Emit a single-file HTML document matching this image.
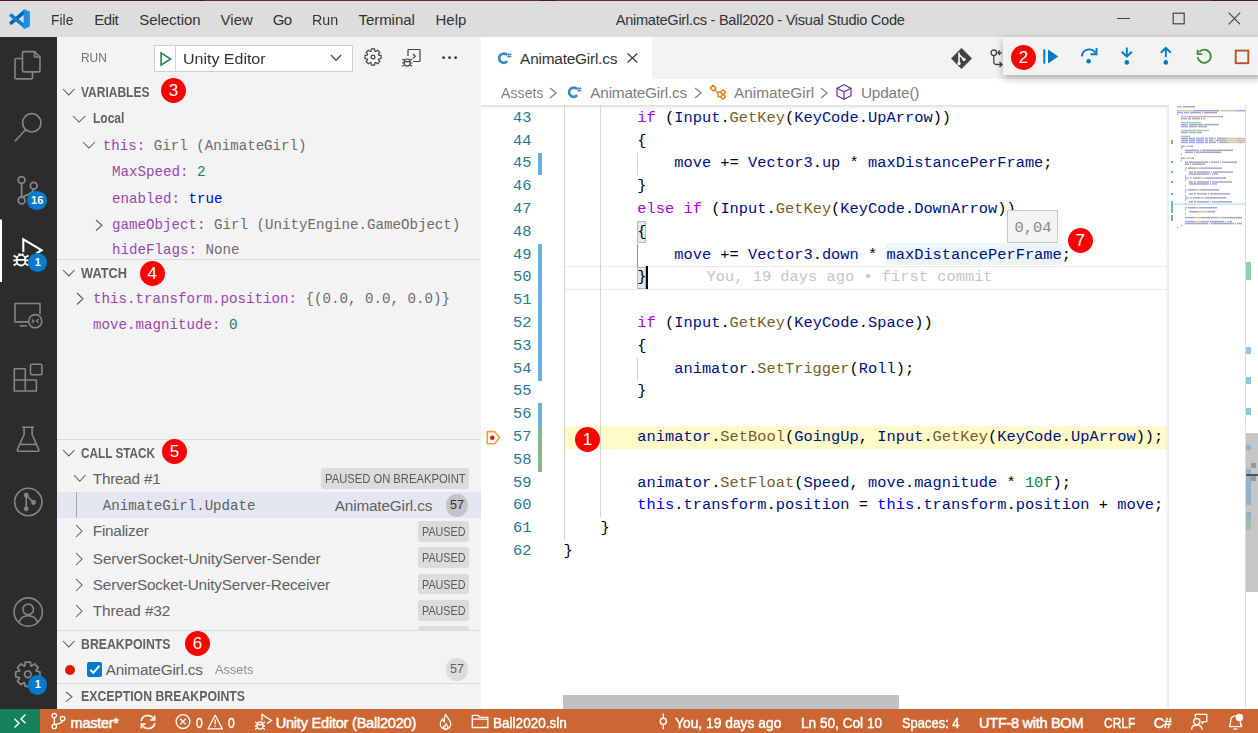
<!DOCTYPE html>
<html><head><meta charset="utf-8">
<style>
*{box-sizing:border-box;margin:0;padding:0}
html,body{width:1258px;height:733px;overflow:hidden;background:#fff;font-family:"Liberation Sans",sans-serif;position:relative}
.abs{position:absolute}
.t{position:absolute;white-space:pre;line-height:1}
</style></head><body>
<div class="abs" style="left:0.00px;top:0.00px;width:1258.00px;height:37.00px;background:#dddddd;"></div><div class="abs" style="left:0.00px;top:0.00px;width:1258.00px;height:1.30px;background:#3a2222;"></div><div class="abs" style="left:205.00px;top:0.00px;width:335.00px;height:1.30px;background:#6a2e30;"></div><div class="abs" style="left:556.00px;top:0.00px;width:655.00px;height:1.30px;background:#6a2e30;"></div><div class="abs" style="left:0.00px;top:37.00px;width:57.00px;height:672.00px;background:#2c2c2c;"></div><div class="abs" style="left:57.00px;top:37.00px;width:424.00px;height:672.00px;background:#f3f3f3;"></div><div class="abs" style="left:481.00px;top:37.00px;width:777.00px;height:42.00px;background:#f3f3f3;"></div><div class="abs" style="left:481.00px;top:79.00px;width:777.00px;height:630.00px;background:#ffffff;"></div><div class="abs" style="left:0.00px;top:709.00px;width:1258.00px;height:24.00px;background:#cc6633;"></div><div class="abs" style="left:0.00px;top:709.00px;width:40.00px;height:24.00px;background:#16825d;"></div><svg class="abs" style="left:0;top:0" width="40" height="37" viewBox="0 0 40 37"><path d="M11.3 22.9 L24.6 11.6" stroke="#0065b0" stroke-width="3.7" stroke-linecap="round"/><path d="M11.3 15.4 L24.6 26.4" stroke="#0a7fd0" stroke-width="3.7" stroke-linecap="round"/><path d="M23.6 8.9 L29.9 11.6 V26.6 L23.6 29.2 Z" fill="#1e8fe6"/></svg><div class="t" style="left:51.10px;top:12.30px;font-size:15.00px;color:#333333;transform:scaleX(0.9275);transform-origin:0 0;">File</div><div class="t" style="left:94.20px;top:12.30px;font-size:15.00px;color:#333333;letter-spacing:-0.417px;">Edit</div><div class="t" style="left:139.20px;top:12.30px;font-size:15.00px;color:#333333;letter-spacing:-0.038px;">Selection</div><div class="t" style="left:220.50px;top:12.30px;font-size:15.00px;color:#333333;letter-spacing:0.067px;">View</div><div class="t" style="left:272.80px;top:12.30px;font-size:15.00px;color:#333333;letter-spacing:-0.800px;">Go</div><div class="t" style="left:312.00px;top:12.30px;font-size:15.00px;color:#333333;transform:scaleX(0.9455);transform-origin:0 0;">Run</div><div class="t" style="left:358.50px;top:12.30px;font-size:15.00px;color:#333333;letter-spacing:-0.057px;">Terminal</div><div class="t" style="left:435.50px;top:12.30px;font-size:15.00px;color:#333333;letter-spacing:0.017px;">Help</div><div class="t" style="left:615.70px;top:12.64px;font-size:14.60px;color:#333333;letter-spacing:-0.273px;">AnimateGirl.cs - Ball2020 - Visual Studio Code</div><div class="abs" style="left:1117.30px;top:18.20px;width:13.10px;height:1.30px;background:#444;"></div><svg class="abs" style="left:1172.00px;top:12.00px;" width="13" height="13" viewBox="0 0 13 13"><rect x="1.2" y="1.2" width="11" height="10.6" fill="none" stroke="#444" stroke-width="1.2"/></svg><svg class="abs" style="left:1227.50px;top:12.00px;" width="13" height="13" viewBox="0 0 13 13"><path d="M0.6 0.6 L12.2 12.4 M12.2 0.6 L0.6 12.4" stroke="#444" stroke-width="1.2"/></svg><svg class="abs" style="left:0;top:37px" width="57" height="672" viewBox="0 37 57 672"><g fill="none" stroke="#858585" stroke-width="1.6" stroke-linejoin="round"><path d="M23.8 51.6 H34.6 L40 57 V70.5 a1.4 1.4 0 0 1 -1.4 1.4 H23.9 a1.4 1.4 0 0 1 -1.4 -1.4 V53 a1.4 1.4 0 0 1 1.3 -1.4 Z"/><path d="M34.6 51.6 V57 H40"/><path d="M22.5 58.5 H16.4 a1.4 1.4 0 0 0 -1.4 1.4 V77.5 a1.4 1.4 0 0 0 1.4 1.4 H31.1 a1.4 1.4 0 0 0 1.4 -1.4 V71.9"/></g><g fill="none" stroke="#858585" stroke-width="1.7"><circle cx="31.8" cy="122.8" r="9.2"/><path d="M25.3 130 L15.4 140.8" stroke-linecap="round"/></g><g fill="none" stroke="#858585" stroke-width="1.8"><circle cx="21.6" cy="180" r="3.4"/><circle cx="33.7" cy="185.7" r="3.4"/><circle cx="21.6" cy="200.4" r="3.4"/><path d="M21.6 183.4 V197"/><path d="M33.7 189.1 C33.7 194 28 193.5 22.6 197.2"/></g><rect x="0" y="219.5" width="2" height="62.5" fill="#fff"/><g fill="none" stroke="#fff" stroke-width="2.1" stroke-linejoin="miter"><path d="M23.3 252 V239.3 L41.6 250.2 L36.4 253.3"/></g><g fill="none" stroke="#fff" stroke-width="1.8"><ellipse cx="21" cy="260.2" rx="4.4" ry="5.3"/><path d="M16.6 259.8 H25.4 M13.6 255.6 L16.8 257.6 M28.4 255.6 L25.2 257.6 M13.3 260.4 H16.6 M25.4 260.4 H28.6 M13.6 265.6 L16.8 263.6 M28.4 265.6 L25.2 263.6 M18.8 254.8 L19.8 253.4 M23.2 254.8 L22.2 253.4"/></g><g fill="none" stroke="#858585" stroke-width="1.6"><path d="M28.3 321.9 H15 V303.5 H40 V314.3"/><path d="M19.6 325.9 H27"/><circle cx="35.2" cy="321.2" r="6.6"/></g><g fill="none" stroke="#858585" stroke-width="1.3"><path d="M31.8 319.5 l2.1 1.8 l-2.1 1.8 M38.6 319.1 l-2.1 1.8 l2.1 1.8"/></g><g fill="none" stroke="#858585" stroke-width="1.6" stroke-linejoin="round"><path d="M14.3 368.8 H25.3 V391 H14.3 Z M14.3 380 H36.4 V391 H25.3"/><rect x="30.5" y="364.3" width="11.4" height="10.4" rx="1.3"/></g><g fill="none" stroke="#858585" stroke-width="1.6" stroke-linejoin="round"><path d="M22.1 427.2 H34 M24.1 427.2 V434.5 L17.4 449.6 a1.2 1.2 0 0 0 1.1 1.6 H37.7 a1.2 1.2 0 0 0 1.1 -1.6 L32.1 434.5 V427.2"/><path d="M19.9 444.4 H36.3"/></g><g fill="none" stroke="#858585" stroke-width="1.6"><circle cx="28.3" cy="502" r="13.7"/><path d="M26.2 495.2 V508.8 M26.2 495.2 L33.6 502.5"/></g><g fill="#858585"><circle cx="26.2" cy="495.2" r="2.4"/><circle cx="33.6" cy="502.5" r="2.4"/><circle cx="26.2" cy="508.8" r="2.4"/></g><g fill="none" stroke="#858585" stroke-width="1.6"><circle cx="28.2" cy="612" r="14.1"/><circle cx="28.2" cy="609.4" r="5.3"/><path d="M18.8 622.6 C20.5 617.6 24 615.8 28.2 615.8 C32.4 615.8 35.9 617.6 37.6 622.6"/></g><g fill="none" stroke="#858585" stroke-width="1.7" stroke-linejoin="round"><polygon points="25.22,662.17 30.38,662.17 30.97,665.88 31.51,666.10 34.55,663.90 38.20,667.55 36.00,670.59 36.22,671.13 39.93,671.72 39.93,676.88 36.22,677.47 36.00,678.01 38.20,681.05 34.55,684.70 31.51,682.50 30.97,682.72 30.38,686.43 25.22,686.43 24.63,682.72 24.09,682.50 21.05,684.70 17.40,681.05 19.60,678.01 19.38,677.47 15.67,676.88 15.67,671.72 19.38,671.13 19.60,670.59 17.40,667.55 21.05,663.90 24.09,666.10 24.63,665.88"/><circle cx="27.80" cy="674.30" r="3.3"/></g></svg><div class="abs" style="left:27.45px;top:190.75px;width:19.50px;height:19.50px;border-radius:50%;background:#007acc;color:#fff;font-size:11.0px;font-weight:bold;text-align:center;line-height:19.50px;">16</div><div class="abs" style="left:27.95px;top:252.75px;width:19.50px;height:19.50px;border-radius:50%;background:#007acc;color:#fff;font-size:11.0px;font-weight:bold;text-align:center;line-height:19.50px;">1</div><div class="abs" style="left:27.95px;top:675.15px;width:19.50px;height:19.50px;border-radius:50%;background:#007acc;color:#fff;font-size:11.0px;font-weight:bold;text-align:center;line-height:19.50px;">1</div><div class="t" style="left:80.80px;top:52.06px;font-size:12.80px;color:#6f6f6f;transform:scaleX(0.9297);transform-origin:0 0;">RUN</div><div class="abs" style="left:154.20px;top:45.30px;width:198.60px;height:26.30px;background:#ffffff;border:1px solid #d0d0d0;"></div><div class="abs" style="left:175.00px;top:46.30px;width:1.00px;height:24.30px;background:#d0d0d0;"></div><svg class="abs" style="left:159.00px;top:50.50px;" width="14" height="16" viewBox="0 0 14 16"><path d="M2.1 1.9 L11.6 8 L2.1 14.1 Z" fill="none" stroke="#1e8a4c" stroke-width="1.6" stroke-linejoin="miter"/></svg><div class="t" style="left:183.40px;top:51.20px;font-size:15.00px;color:#333333;transform:scaleX(1.0651);transform-origin:0 0;">Unity Editor</div><svg class="abs" style="left:330.10px;top:54.00px;" width="12.1" height="7.9" viewBox="0 0 12.1 7.9"><path d="M1 1 L6.05 6.40 L11.10 1" fill="none" stroke="#424242" stroke-width="1.20"/></svg><svg class="abs" style="left:363.40px;top:47.20px;" width="20" height="20" viewBox="0 0 20 20"><g fill="none" stroke="#424242" stroke-width="1.2" stroke-linejoin="round"><polygon points="8.37,1.96 11.63,1.96 11.94,4.32 12.64,4.61 14.53,3.17 16.83,5.47 15.39,7.36 15.68,8.06 18.04,8.37 18.04,11.63 15.68,11.94 15.39,12.64 16.83,14.53 14.53,16.83 12.64,15.39 11.94,15.68 11.63,18.04 8.37,18.04 8.06,15.68 7.36,15.39 5.47,16.83 3.17,14.53 4.61,12.64 4.32,11.94 1.96,11.63 1.96,8.37 4.32,8.06 4.61,7.36 3.17,5.47 5.47,3.17 7.36,4.61 8.06,4.32"/><circle cx="10" cy="10" r="1.9"/></g></svg><svg class="abs" style="left:401.00px;top:48.00px;" width="21" height="21" viewBox="0 0 21 21"><g fill="none" stroke="#424242" stroke-width="1.2"><path d="M7 8 V2.2 a0.7 0.7 0 0 1 0.7 -0.7 H18.3 a0.7 0.7 0 0 1 0.7 0.7 V12.8 a0.7 0.7 0 0 1 -0.7 0.7 H12"/><path d="M12 6 l2.3 2.2 l-2.3 2.2"/><ellipse cx="6.2" cy="14.6" rx="3" ry="3.6"/><path d="M3.2 13.6 h6 M1.3 11 l2 1.3 M11.1 11 l-2 1.3 M1 15 h2.2 M9.2 15 h2.2 M1.3 18.3 l2 -1.3 M11.1 18.3 l-2 -1.3"/></g></svg><svg class="abs" style="left:442.20px;top:55.60px;" width="3.2" height="3.2" viewBox="0 0 3.2 3.2"><circle cx="1.6" cy="1.6" r="1.45" fill="#424242"/></svg><svg class="abs" style="left:448.40px;top:55.60px;" width="3.2" height="3.2" viewBox="0 0 3.2 3.2"><circle cx="1.6" cy="1.6" r="1.45" fill="#424242"/></svg><svg class="abs" style="left:454.40px;top:55.60px;" width="3.2" height="3.2" viewBox="0 0 3.2 3.2"><circle cx="1.6" cy="1.6" r="1.45" fill="#424242"/></svg><svg class="abs" style="left:61.60px;top:87.70px;" width="13.6" height="8.4" viewBox="0 0 13.6 8.4"><path d="M1 1 L6.80 6.90 L12.60 1" fill="none" stroke="#5a5a5a" stroke-width="1.05"/></svg><div class="t" style="left:80.80px;top:85.05px;font-size:14.00px;color:#616161;font-weight:bold;transform:scaleX(0.8566);transform-origin:0 0;">VARIABLES</div><div class="abs" style="left:161.10px;top:78.00px;width:25.00px;height:25.00px;border-radius:50%;background:#f00;color:#fff;font-size:17.0px;font-weight:normal;text-align:center;line-height:25.00px;">3</div><svg class="abs" style="left:72.00px;top:114.60px;" width="14.3" height="8.6" viewBox="0 0 14.3 8.6"><path d="M1 1 L7.15 7.10 L13.30 1" fill="none" stroke="#5a5a5a" stroke-width="1.05"/></svg><div class="t" style="left:92.80px;top:110.95px;font-size:14.00px;color:#616161;font-weight:bold;transform:scaleX(0.8564);transform-origin:0 0;">Local</div><svg class="abs" style="left:81.80px;top:140.70px;" width="14" height="8.6" viewBox="0 0 14 8.6"><path d="M1 1 L7.00 7.10 L13.00 1" fill="none" stroke="#5a5a5a" stroke-width="1.05"/></svg><div class="t" style="left:102.70px;top:139.04px;font-size:14.17px;color:#9b46b0;font-family:'Liberation Mono',monospace;">this: </div><div class="t" style="left:153.70px;top:139.04px;font-size:14.17px;color:#6c6c6c;font-family:'Liberation Mono',monospace;">Girl (AnimateGirl)</div><div class="t" style="left:112.00px;top:164.84px;font-size:14.17px;color:#9b46b0;font-family:'Liberation Mono',monospace;">MaxSpeed: </div><div class="t" style="left:197.00px;top:164.84px;font-size:14.17px;color:#098658;font-family:'Liberation Mono',monospace;">2</div><div class="t" style="left:112.00px;top:191.64px;font-size:14.17px;color:#9b46b0;font-family:'Liberation Mono',monospace;">enabled: </div><div class="t" style="left:188.50px;top:191.64px;font-size:14.17px;color:#0000ff;font-family:'Liberation Mono',monospace;">true</div><svg class="abs" style="left:94.80px;top:219.40px;" width="8.5" height="12.5" viewBox="0 0 8.5 12.5"><path d="M1 1 L7.00 6.25 L1 11.50" fill="none" stroke="#5a5a5a" stroke-width="1.05"/></svg><div class="t" style="left:112.00px;top:217.54px;font-size:14.17px;color:#9b46b0;font-family:'Liberation Mono',monospace;">gameObject: </div><div class="t" style="left:214.00px;top:217.54px;font-size:14.17px;color:#6c6c6c;font-family:'Liberation Mono',monospace;">Girl (UnityEngine.GameObject)</div><div class="abs" style="left:57px;top:237px;width:424px;height:22.2px;overflow:hidden"><div class="t" style="left:55.00px;top:6.34px;font-size:14.17px;color:#9b46b0;font-family:'Liberation Mono',monospace;">hideFlags: </div><div class="t" style="left:148.50px;top:6.34px;font-size:14.17px;color:#6c6c6c;font-family:'Liberation Mono',monospace;">None</div></div><div class="abs" style="left:57.00px;top:259.00px;width:424.00px;height:1.00px;background:#dcdcdc;"></div><svg class="abs" style="left:61.60px;top:268.70px;" width="13.6" height="8.4" viewBox="0 0 13.6 8.4"><path d="M1 1 L6.80 6.90 L12.60 1" fill="none" stroke="#5a5a5a" stroke-width="1.05"/></svg><div class="t" style="left:80.50px;top:266.05px;font-size:14.00px;color:#616161;font-weight:bold;transform:scaleX(0.9145);transform-origin:0 0;">WATCH</div><div class="abs" style="left:139.80px;top:261.00px;width:25.00px;height:25.00px;border-radius:50%;background:#f00;color:#fff;font-size:17.0px;font-weight:normal;text-align:center;line-height:25.00px;">4</div><svg class="abs" style="left:75.50px;top:292.00px;" width="8.5" height="13.5" viewBox="0 0 8.5 13.5"><path d="M1 1 L7.00 6.75 L1 12.50" fill="none" stroke="#5a5a5a" stroke-width="1.05"/></svg><div class="t" style="left:93.00px;top:292.14px;font-size:14.17px;color:#9b46b0;font-family:'Liberation Mono',monospace;">this.transform.position: </div><div class="t" style="left:305.50px;top:292.14px;font-size:14.17px;color:#6c6c6c;font-family:'Liberation Mono',monospace;">{(0.0, 0.0, 0.0)}</div><div class="t" style="left:93.00px;top:317.94px;font-size:14.17px;color:#9b46b0;font-family:'Liberation Mono',monospace;">move.magnitude: </div><div class="t" style="left:229.00px;top:317.94px;font-size:14.17px;color:#098658;font-family:'Liberation Mono',monospace;">0</div><div class="abs" style="left:57.00px;top:439.00px;width:424.00px;height:1.00px;background:#dcdcdc;"></div><svg class="abs" style="left:61.60px;top:448.70px;" width="13.6" height="8.4" viewBox="0 0 13.6 8.4"><path d="M1 1 L6.80 6.90 L12.60 1" fill="none" stroke="#5a5a5a" stroke-width="1.05"/></svg><div class="t" style="left:80.80px;top:446.05px;font-size:14.00px;color:#616161;font-weight:bold;transform:scaleX(0.8395);transform-origin:0 0;">CALL STACK</div><div class="abs" style="left:162.10px;top:439.10px;width:25.00px;height:25.00px;border-radius:50%;background:#f00;color:#fff;font-size:17.0px;font-weight:normal;text-align:center;line-height:25.00px;">5</div><svg class="abs" style="left:72.90px;top:474.20px;" width="13.5" height="8.8" viewBox="0 0 13.5 8.8"><path d="M1 1 L6.75 7.30 L12.50 1" fill="none" stroke="#5a5a5a" stroke-width="1.05"/></svg><div class="t" style="left:92.80px;top:470.75px;font-size:15.30px;color:#616161;letter-spacing:-0.231px;">Thread #1</div><div class="abs" style="left:321.00px;top:468.00px;width:148.00px;height:20.60px;background:#dcdcdc;border-radius:3px"></div><div class="t" style="left:324.60px;top:472.90px;font-size:12.40px;color:#5a5a5a;transform:scaleX(0.9055);transform-origin:0 0;">PAUSED ON BREAKPOINT</div><div class="abs" style="left:57.00px;top:492.00px;width:424.00px;height:26.20px;background:#e4e6f1;"></div><div class="abs" style="left:76.00px;top:492.00px;width:1.00px;height:26.20px;background:#a9a9a9;"></div><div class="t" style="left:102.70px;top:499.14px;font-size:14.17px;color:#616161;font-family:'Liberation Mono',monospace;">AnimateGirl.Update</div><div class="t" style="left:334.70px;top:497.65px;font-size:15.30px;color:#616161;letter-spacing:-0.135px;">AnimateGirl.cs</div><div class="abs" style="left:445.75px;top:494.45px;width:22.50px;height:22.50px;border-radius:50%;background:#c4c4c4;color:#333;font-size:12.5px;font-weight:normal;text-align:center;line-height:22.50px;">57</div><svg class="abs" style="left:74.80px;top:524.40px;" width="8.5" height="14" viewBox="0 0 8.5 14"><path d="M1 1 L7.00 7.00 L1 13.00" fill="none" stroke="#5a5a5a" stroke-width="1.05"/></svg><div class="t" style="left:92.80px;top:523.45px;font-size:15.30px;color:#616161;letter-spacing:-0.225px;">Finalizer</div><div class="abs" style="left:418.20px;top:521.00px;width:50.60px;height:20.60px;background:#dcdcdc;border-radius:3px"></div><div class="t" style="left:421.80px;top:525.90px;font-size:12.40px;color:#5a5a5a;transform:scaleX(0.8691);transform-origin:0 0;">PAUSED</div><svg class="abs" style="left:74.80px;top:551.60px;" width="8.5" height="14" viewBox="0 0 8.5 14"><path d="M1 1 L7.00 7.00 L1 13.00" fill="none" stroke="#5a5a5a" stroke-width="1.05"/></svg><div class="t" style="left:92.80px;top:550.65px;font-size:15.30px;color:#616161;letter-spacing:-0.117px;">ServerSocket-UnityServer-Sender</div><div class="abs" style="left:418.20px;top:547.40px;width:50.60px;height:20.60px;background:#dcdcdc;border-radius:3px"></div><div class="t" style="left:421.80px;top:552.30px;font-size:12.40px;color:#5a5a5a;transform:scaleX(0.8691);transform-origin:0 0;">PAUSED</div><svg class="abs" style="left:74.80px;top:578.00px;" width="8.5" height="14" viewBox="0 0 8.5 14"><path d="M1 1 L7.00 7.00 L1 13.00" fill="none" stroke="#5a5a5a" stroke-width="1.05"/></svg><div class="t" style="left:92.80px;top:577.05px;font-size:15.30px;color:#616161;letter-spacing:-0.156px;">ServerSocket-UnityServer-Receiver</div><div class="abs" style="left:418.20px;top:573.80px;width:50.60px;height:20.60px;background:#dcdcdc;border-radius:3px"></div><div class="t" style="left:421.80px;top:578.70px;font-size:12.40px;color:#5a5a5a;transform:scaleX(0.8691);transform-origin:0 0;">PAUSED</div><svg class="abs" style="left:74.80px;top:604.00px;" width="8.5" height="14" viewBox="0 0 8.5 14"><path d="M1 1 L7.00 7.00 L1 13.00" fill="none" stroke="#5a5a5a" stroke-width="1.05"/></svg><div class="t" style="left:92.80px;top:603.05px;font-size:15.30px;color:#616161;letter-spacing:-0.083px;">Thread #32</div><div class="abs" style="left:418.20px;top:600.00px;width:50.60px;height:20.60px;background:#dcdcdc;border-radius:3px"></div><div class="t" style="left:421.80px;top:604.90px;font-size:12.40px;color:#5a5a5a;transform:scaleX(0.8691);transform-origin:0 0;">PAUSED</div><div class="abs" style="left:417.8px;top:626px;width:51.4px;height:4.4px;background:#dcdcdc;border-radius:3px 3px 0 0"></div><div class="abs" style="left:57.00px;top:630.00px;width:424.00px;height:1.00px;background:#dcdcdc;"></div><svg class="abs" style="left:61.60px;top:639.70px;" width="13.6" height="8.4" viewBox="0 0 13.6 8.4"><path d="M1 1 L6.80 6.90 L12.60 1" fill="none" stroke="#5a5a5a" stroke-width="1.05"/></svg><div class="t" style="left:80.80px;top:636.85px;font-size:14.00px;color:#616161;font-weight:bold;transform:scaleX(0.8783);transform-origin:0 0;">BREAKPOINTS</div><div class="abs" style="left:185.10px;top:630.90px;width:25.00px;height:25.00px;border-radius:50%;background:#f00;color:#fff;font-size:17.0px;font-weight:normal;text-align:center;line-height:25.00px;">6</div><svg class="abs" style="left:65.00px;top:664.50px;" width="10" height="10" viewBox="0 0 10 10"><circle cx="5" cy="5" r="5" fill="#e51400"/></svg><div class="abs" style="left:86.8px;top:662px;width:15.3px;height:15px;background:#007acc;border-radius:2px"></div><svg class="abs" style="left:86.80px;top:662.00px;" width="15.3" height="15" viewBox="0 0 15.3 15"><path d="M3.2 7.6 L6.3 10.8 L12.3 3.8" fill="none" stroke="#fff" stroke-width="1.9"/></svg><div class="t" style="left:105.70px;top:661.55px;font-size:15.30px;color:#616161;letter-spacing:-0.165px;">AnimateGirl.cs</div><div class="t" style="left:215.00px;top:662.77px;font-size:13.50px;color:#8e8e8e;transform:scaleX(0.9457);transform-origin:0 0;">Assets</div><div class="abs" style="left:445.75px;top:658.25px;width:22.50px;height:22.50px;border-radius:50%;background:#dcdcdc;color:#616161;font-size:12.5px;font-weight:normal;text-align:center;line-height:22.50px;">57</div><div class="abs" style="left:57.00px;top:683.30px;width:424.00px;height:1.00px;background:#dcdcdc;"></div><svg class="abs" style="left:65.00px;top:690.80px;" width="8.5" height="11.6" viewBox="0 0 8.5 11.6"><path d="M1 1 L7.00 5.80 L1 10.60" fill="none" stroke="#5a5a5a" stroke-width="1.05"/></svg><div class="t" style="left:80.80px;top:688.55px;font-size:14.00px;color:#616161;font-weight:bold;transform:scaleX(0.8784);transform-origin:0 0;">EXCEPTION BREAKPOINTS</div><div class="abs" style="left:481.00px;top:37.00px;width:171.00px;height:42.00px;background:#ffffff;"></div><svg class="abs" style="left:497.80px;top:52.00px;" width="15" height="13" viewBox="0 0 15 13"><path d="M9.2 3.2 A4.6 4.6 0 1 0 9.2 9.2" fill="none" stroke="#3b8bc2" stroke-width="2.7"/><path d="M10.6 1.2 L10.1 5.8 M12.4 1.2 L11.9 5.8 M9.4 2.5 H13.6 M9.3 4.5 H13.5" stroke="#3b8bc2" stroke-width="0.9" fill="none"/></svg><div class="t" style="left:520.10px;top:50.76px;font-size:15.40px;color:#333333;letter-spacing:-0.215px;">AnimateGirl.cs</div><svg class="abs" style="left:627.20px;top:53.30px;" width="11" height="10" viewBox="0 0 11 10"><path d="M0.5 0.5 L10.3 9.5 M10.3 0.5 L0.5 9.5" stroke="#424242" stroke-width="1.3"/></svg><svg class="abs" style="left:950.50px;top:47.50px;" width="21" height="21" viewBox="0 0 21 21"><path d="M10.5 0.3 L20.7 10.5 L10.5 20.7 L0.3 10.5 Z" fill="#424242" stroke="#424242" stroke-width="0.6" stroke-linejoin="round"/><g stroke="#fff" stroke-width="1.5" fill="none"><path d="M8 4.5 V15.5 M8 6.5 L13 11.5"/></g><g fill="#fff"><circle cx="8" cy="15.5" r="1.7"/><circle cx="13" cy="11.5" r="1.7"/></g></svg><svg class="abs" style="left:990.00px;top:49.00px;" width="14" height="19" viewBox="0 0 14 19"><g fill="none" stroke="#424242" stroke-width="1.3"><circle cx="3.8" cy="3.8" r="2.8"/><path d="M3.8 6.6 V13 a2.5 2.5 0 0 0 2.5 2.5 H12 M9.5 13 L12 15.5 L9.5 18 M12 3.8 H8 M10 1.5 L8 3.8 L10 6"/></g></svg><div class="t" style="left:500.70px;top:84.96px;font-size:15.40px;color:#808080;transform:scaleX(0.9221);transform-origin:0 0;">Assets</div><svg class="abs" style="left:549.00px;top:86.50px;" width="9" height="12" viewBox="0 0 9 12"><path d="M1 1 L7.2 6 L1 11" fill="none" stroke="#808080" stroke-width="1.2"/></svg><svg class="abs" style="left:568.00px;top:85.50px;" width="15" height="13" viewBox="0 0 15 13"><path d="M9.2 3.2 A4.6 4.6 0 1 0 9.2 9.2" fill="none" stroke="#3b8bc2" stroke-width="2.7"/><path d="M10.6 1.2 L10.1 5.8 M12.4 1.2 L11.9 5.8 M9.4 2.5 H13.6 M9.3 4.5 H13.5" stroke="#3b8bc2" stroke-width="0.9" fill="none"/></svg><div class="t" style="left:590.30px;top:84.96px;font-size:15.40px;color:#808080;letter-spacing:-0.246px;">AnimateGirl.cs</div><svg class="abs" style="left:694.00px;top:86.50px;" width="9" height="12" viewBox="0 0 9 12"><path d="M1 1 L7.2 6 L1 11" fill="none" stroke="#808080" stroke-width="1.2"/></svg><svg class="abs" style="left:708.50px;top:84.00px;" width="18" height="16" viewBox="0 0 18 16"><g fill="none" stroke="#d67e00" stroke-width="1.3" stroke-linejoin="round"><path d="M1.2 4 L4 1.2 L7 4.2 L4.2 7 Z M11.5 8.2 L14 5.7 L16.6 8.2 L14 10.8 Z M11.5 12.8 L14 10.3 L16.6 12.8 L14 15.4 Z"/><path d="M5.6 5.6 L9 9 V12.8 H11.5 M9 8.2 H11.5"/></g></svg><div class="t" style="left:734.10px;top:84.96px;font-size:15.40px;color:#808080;letter-spacing:-0.035px;">AnimateGirl</div><svg class="abs" style="left:820.20px;top:86.50px;" width="9" height="12" viewBox="0 0 9 12"><path d="M1 1 L7.2 6 L1 11" fill="none" stroke="#808080" stroke-width="1.2"/></svg><svg class="abs" style="left:835.50px;top:84.00px;" width="16" height="16" viewBox="0 0 16 16"><g fill="none" stroke="#652d90" stroke-width="1.2" stroke-linejoin="round"><path d="M8 0.8 L15 4.3 V11.8 L8 15.3 L1 11.8 V4.3 Z"/><path d="M1 4.3 L8 7.8 L15 4.3 M8 7.8 V15.3"/></g></svg><div class="t" style="left:860.90px;top:84.96px;font-size:15.40px;color:#808080;letter-spacing:-0.186px;">Update()</div><div class="abs" style="left:481px;top:105px;width:687px;height:4px;background:linear-gradient(#dddddd,rgba(255,255,255,0))"></div><div class="abs" style="left:563.50px;top:426.20px;width:604.50px;height:22.80px;background:#fffbc9;"></div><div class="abs" style="left:563.50px;top:266.30px;width:604.50px;height:23.40px;border-top:1.6px solid #ebebeb;border-bottom:1.6px solid #ebebeb"></div><div class="abs" style="left:885.80px;top:242.70px;width:175.90px;height:22.80px;background:#ecf5fc;"></div><div class="abs" style="left:563.50px;top:105.00px;width:1.00px;height:435.20px;background:#d3d3d3;"></div><div class="abs" style="left:600.42px;top:105.00px;width:1.00px;height:412.40px;background:#d3d3d3;"></div><div class="abs" style="left:637.34px;top:152.60px;width:1.00px;height:22.80px;background:#d3d3d3;"></div><div class="abs" style="left:637.34px;top:357.80px;width:1.00px;height:22.80px;background:#d3d3d3;"></div><div class="abs" style="left:637.34px;top:243.80px;width:1.00px;height:22.80px;background:#939393;"></div><div class="abs" style="left:636.84px;top:221.00px;width:9.23px;height:22.30px;background:#e8e8e8;border:1px solid #b9b9b9;"></div><div class="abs" style="left:636.84px;top:266.60px;width:9.23px;height:22.30px;background:#e8e8e8;border:1px solid #b9b9b9;"></div><div class="t" style="left:491.00px;top:110.71px;font-size:15.38px;color:#237893;font-family:'Liberation Mono',monospace;width:40.5px;text-align:right;">43</div><div class="t" style="left:563.50px;top:110.71px;font-size:15.38px;color:#000;font-family:'Liberation Mono',monospace;">        <span style="color:#af00db">if</span> <span style="color:#000000">(</span><span style="color:#001080">Input</span><span style="color:#000000">.</span><span style="color:#795e26">GetKey</span><span style="color:#000000">(</span><span style="color:#001080">KeyCode</span><span style="color:#000000">.</span><span style="color:#001080">UpArrow</span><span style="color:#000000">))</span></div><div class="t" style="left:491.00px;top:133.51px;font-size:15.38px;color:#237893;font-family:'Liberation Mono',monospace;width:40.5px;text-align:right;">44</div><div class="t" style="left:563.50px;top:133.51px;font-size:15.38px;color:#000;font-family:'Liberation Mono',monospace;">        <span style="color:#000000">{</span></div><div class="t" style="left:491.00px;top:156.31px;font-size:15.38px;color:#237893;font-family:'Liberation Mono',monospace;width:40.5px;text-align:right;">45</div><div class="t" style="left:563.50px;top:156.31px;font-size:15.38px;color:#000;font-family:'Liberation Mono',monospace;">            <span style="color:#001080">move</span> <span style="color:#000000">+=</span> <span style="color:#001080">Vector3</span><span style="color:#000000">.</span><span style="color:#001080">up</span> <span style="color:#000000">*</span> <span style="color:#001080">maxDistancePerFrame</span><span style="color:#000000">;</span></div><div class="t" style="left:491.00px;top:179.11px;font-size:15.38px;color:#237893;font-family:'Liberation Mono',monospace;width:40.5px;text-align:right;">46</div><div class="t" style="left:563.50px;top:179.11px;font-size:15.38px;color:#000;font-family:'Liberation Mono',monospace;">        <span style="color:#000000">}</span></div><div class="t" style="left:491.00px;top:201.91px;font-size:15.38px;color:#237893;font-family:'Liberation Mono',monospace;width:40.5px;text-align:right;">47</div><div class="t" style="left:563.50px;top:201.91px;font-size:15.38px;color:#000;font-family:'Liberation Mono',monospace;">        <span style="color:#af00db">else if</span> <span style="color:#000000">(</span><span style="color:#001080">Input</span><span style="color:#000000">.</span><span style="color:#795e26">GetKey</span><span style="color:#000000">(</span><span style="color:#001080">KeyCode</span><span style="color:#000000">.</span><span style="color:#001080">DownArrow</span><span style="color:#000000">))</span></div><div class="t" style="left:491.00px;top:224.71px;font-size:15.38px;color:#237893;font-family:'Liberation Mono',monospace;width:40.5px;text-align:right;">48</div><div class="t" style="left:563.50px;top:224.71px;font-size:15.38px;color:#000;font-family:'Liberation Mono',monospace;">        <span style="color:#000000">{</span></div><div class="t" style="left:491.00px;top:247.51px;font-size:15.38px;color:#237893;font-family:'Liberation Mono',monospace;width:40.5px;text-align:right;">49</div><div class="t" style="left:563.50px;top:247.51px;font-size:15.38px;color:#000;font-family:'Liberation Mono',monospace;">            <span style="color:#001080">move</span> <span style="color:#000000">+=</span> <span style="color:#001080">Vector3</span><span style="color:#000000">.</span><span style="color:#001080">down</span> <span style="color:#000000">*</span> <span style="color:#001080">maxDistancePerFrame</span><span style="color:#000000">;</span></div><div class="t" style="left:491.00px;top:270.31px;font-size:15.38px;color:#237893;font-family:'Liberation Mono',monospace;width:40.5px;text-align:right;">50</div><div class="t" style="left:563.50px;top:270.31px;font-size:15.38px;color:#000;font-family:'Liberation Mono',monospace;">        <span style="color:#000000">}</span></div><div class="t" style="left:491.00px;top:293.11px;font-size:15.38px;color:#237893;font-family:'Liberation Mono',monospace;width:40.5px;text-align:right;">51</div><div class="t" style="left:491.00px;top:315.91px;font-size:15.38px;color:#237893;font-family:'Liberation Mono',monospace;width:40.5px;text-align:right;">52</div><div class="t" style="left:563.50px;top:315.91px;font-size:15.38px;color:#000;font-family:'Liberation Mono',monospace;">        <span style="color:#af00db">if</span> <span style="color:#000000">(</span><span style="color:#001080">Input</span><span style="color:#000000">.</span><span style="color:#795e26">GetKey</span><span style="color:#000000">(</span><span style="color:#001080">KeyCode</span><span style="color:#000000">.</span><span style="color:#001080">Space</span><span style="color:#000000">))</span></div><div class="t" style="left:491.00px;top:338.71px;font-size:15.38px;color:#237893;font-family:'Liberation Mono',monospace;width:40.5px;text-align:right;">53</div><div class="t" style="left:563.50px;top:338.71px;font-size:15.38px;color:#000;font-family:'Liberation Mono',monospace;">        <span style="color:#000000">{</span></div><div class="t" style="left:491.00px;top:361.51px;font-size:15.38px;color:#237893;font-family:'Liberation Mono',monospace;width:40.5px;text-align:right;">54</div><div class="t" style="left:563.50px;top:361.51px;font-size:15.38px;color:#000;font-family:'Liberation Mono',monospace;">            <span style="color:#001080">animator</span><span style="color:#000000">.</span><span style="color:#795e26">SetTrigger</span><span style="color:#000000">(</span><span style="color:#001080">Roll</span><span style="color:#000000">);</span></div><div class="t" style="left:491.00px;top:384.31px;font-size:15.38px;color:#237893;font-family:'Liberation Mono',monospace;width:40.5px;text-align:right;">55</div><div class="t" style="left:563.50px;top:384.31px;font-size:15.38px;color:#000;font-family:'Liberation Mono',monospace;">        <span style="color:#000000">}</span></div><div class="t" style="left:491.00px;top:407.11px;font-size:15.38px;color:#237893;font-family:'Liberation Mono',monospace;width:40.5px;text-align:right;">56</div><div class="t" style="left:491.00px;top:429.91px;font-size:15.38px;color:#237893;font-family:'Liberation Mono',monospace;width:40.5px;text-align:right;">57</div><div class="t" style="left:563.50px;top:429.91px;font-size:15.38px;color:#000;font-family:'Liberation Mono',monospace;">        <span style="color:#001080">animator</span><span style="color:#000000">.</span><span style="color:#795e26">SetBool</span><span style="color:#000000">(</span><span style="color:#001080">GoingUp</span><span style="color:#000000">, </span><span style="color:#001080">Input</span><span style="color:#000000">.</span><span style="color:#795e26">GetKey</span><span style="color:#000000">(</span><span style="color:#001080">KeyCode</span><span style="color:#000000">.</span><span style="color:#001080">UpArrow</span><span style="color:#000000">));</span></div><div class="t" style="left:491.00px;top:452.71px;font-size:15.38px;color:#237893;font-family:'Liberation Mono',monospace;width:40.5px;text-align:right;">58</div><div class="t" style="left:491.00px;top:475.51px;font-size:15.38px;color:#237893;font-family:'Liberation Mono',monospace;width:40.5px;text-align:right;">59</div><div class="t" style="left:563.50px;top:475.51px;font-size:15.38px;color:#000;font-family:'Liberation Mono',monospace;">        <span style="color:#001080">animator</span><span style="color:#000000">.</span><span style="color:#795e26">SetFloat</span><span style="color:#000000">(</span><span style="color:#001080">Speed</span><span style="color:#000000">, </span><span style="color:#001080">move</span><span style="color:#000000">.</span><span style="color:#001080">magnitude</span> <span style="color:#000000">*</span> <span style="color:#098658">10f</span><span style="color:#000000">);</span></div><div class="t" style="left:491.00px;top:498.31px;font-size:15.38px;color:#237893;font-family:'Liberation Mono',monospace;width:40.5px;text-align:right;">60</div><div class="t" style="left:563.50px;top:498.31px;font-size:15.38px;color:#000;font-family:'Liberation Mono',monospace;">        <span style="color:#0000ff">this</span><span style="color:#000000">.</span><span style="color:#001080">transform</span><span style="color:#000000">.</span><span style="color:#001080">position</span> <span style="color:#000000">=</span> <span style="color:#0000ff">this</span><span style="color:#000000">.</span><span style="color:#001080">transform</span><span style="color:#000000">.</span><span style="color:#001080">position</span> <span style="color:#000000">+</span> <span style="color:#001080">move</span><span style="color:#000000">;</span></div><div class="t" style="left:491.00px;top:521.11px;font-size:15.38px;color:#237893;font-family:'Liberation Mono',monospace;width:40.5px;text-align:right;">61</div><div class="t" style="left:563.50px;top:521.11px;font-size:15.38px;color:#000;font-family:'Liberation Mono',monospace;">    <span style="color:#000000">}</span></div><div class="t" style="left:491.00px;top:543.91px;font-size:15.38px;color:#237893;font-family:'Liberation Mono',monospace;width:40.5px;text-align:right;">62</div><div class="t" style="left:563.50px;top:543.91px;font-size:15.38px;color:#000;font-family:'Liberation Mono',monospace;"><span style="color:#000000">}</span></div><div class="t" style="left:706.57px;top:270.31px;font-size:15.38px;color:#c5c5c5;font-family:'Liberation Mono',monospace;">You, 19 days ago • first commit</div><div class="abs" style="left:646.00px;top:266.20px;width:2.00px;height:22.60px;background:#000;"></div><div class="abs" style="left:538.00px;top:152.60px;width:4.00px;height:22.80px;background:#66afe0;"></div><div class="abs" style="left:538.00px;top:243.80px;width:4.00px;height:136.80px;background:#66afe0;"></div><div class="abs" style="left:538.00px;top:403.40px;width:4.00px;height:22.80px;background:#66afe0;"></div><div class="abs" style="left:538.00px;top:426.20px;width:4.00px;height:45.60px;background:#81b88b;"></div><svg class="abs" style="left:486.00px;top:429.80px;" width="15" height="15.5" viewBox="0 0 15 15.5"><path d="M1.2 1.6 H8.6 L13.6 7.7 L8.6 13.8 H1.2 Z" fill="#fff" stroke="#f0a33a" stroke-width="1.6" stroke-linejoin="round"/><circle cx="6.3" cy="7.7" r="2.3" fill="#e51400"/></svg><div class="abs" style="left:575.00px;top:427.00px;width:25.00px;height:25.00px;border-radius:50%;background:#f00;color:#fff;font-size:17.0px;font-weight:normal;text-align:center;line-height:25.00px;">1</div><div class="abs" style="left:1007px;top:209.9px;width:50.7px;height:33.4px;background:#f3f3f3;border:1px solid #c8c8c8"></div><div class="t" style="left:1014.60px;top:220.61px;font-size:15.38px;color:#8a8a8a;font-family:'Liberation Mono',monospace;">0,04</div><div class="abs" style="left:1067.80px;top:227.90px;width:25.00px;height:25.00px;border-radius:50%;background:#f00;color:#fff;font-size:17.0px;font-weight:normal;text-align:center;line-height:25.00px;">7</div><div class="abs" style="left:1168.00px;top:105.00px;width:77.00px;height:604.00px;background:#ffffff;"></div><div class="abs" style="left:1165px;top:105px;width:4px;height:604px;background:linear-gradient(to right,rgba(255,255,255,0),#e8e8e8)"></div><div class="abs" style="left:1245.00px;top:105.00px;width:1.00px;height:604.00px;background:#dcdcdc;"></div><div class="abs" style="left:1246.00px;top:262.00px;width:5.00px;height:18.00px;background:#8fd1a0;"></div><div class="abs" style="left:1246.00px;top:346.80px;width:5.00px;height:6.80px;background:#8cc8ef;"></div><div class="abs" style="left:1246.00px;top:376.80px;width:5.00px;height:6.80px;background:#8cc8ef;"></div><div class="abs" style="left:1246.00px;top:408.00px;width:5.00px;height:6.80px;background:#8cc8ef;"></div><div class="abs" style="left:1245.00px;top:426.00px;width:1.00px;height:14.00px;background:#f5f08a;"></div><div class="abs" style="left:1246.00px;top:432.80px;width:12.00px;height:159.60px;background:#c6c6c6;"></div><div class="abs" style="left:1246.00px;top:445.00px;width:5.00px;height:5.40px;background:#8fb3cc;"></div><div class="abs" style="left:1246.00px;top:469.40px;width:5.00px;height:36.00px;background:#8fb3cc;"></div><div class="abs" style="left:1246.00px;top:511.70px;width:5.00px;height:6.00px;background:#8fb3cc;"></div><div class="abs" style="left:1246.00px;top:518.00px;width:5.00px;height:11.80px;background:#9fbfa5;"></div><div class="abs" style="left:1251.00px;top:462.50px;width:5.00px;height:5.50px;background:#9a9a9a;"></div><div class="abs" style="left:1251.00px;top:475.00px;width:5.00px;height:5.50px;background:#9a9a9a;"></div><div class="abs" style="left:1246.00px;top:473.50px;width:12.00px;height:2.00px;background:#555555;"></div><div class="abs" style="left:563.00px;top:695.00px;width:336.00px;height:14.00px;background:#c1c1c1;"></div><div class="abs" style="left:1003px;top:37.3px;width:260px;height:37.5px;background:#f3f3f3;box-shadow:0 3px 8px rgba(0,0,0,0.3)"></div><div class="abs" style="left:1011.10px;top:45.10px;width:25.00px;height:25.00px;border-radius:50%;background:#f00;color:#fff;font-size:17.0px;font-weight:normal;text-align:center;line-height:25.00px;">2</div><svg class="abs" style="left:1042.00px;top:48.00px;" width="18" height="17" viewBox="0 0 18 17"><rect x="1.3" y="1.4" width="2" height="14.3" fill="#007acc"/><path d="M6 1.4 L16.3 8.5 L6 15.6 Z" fill="#007acc"/></svg><svg class="abs" style="left:1079.00px;top:46.00px;" width="20" height="18" viewBox="0 0 20 18"><path d="M3 10.4 a7.2 7.2 0 0 1 13.4 -3.4" fill="none" stroke="#007acc" stroke-width="1.9"/><path d="M17.5 2 V8.2 H11.5" fill="none" stroke="#007acc" stroke-width="1.9"/><circle cx="9.6" cy="15.2" r="2.3" fill="#007acc"/></svg><svg class="abs" style="left:1119.00px;top:46.00px;" width="16" height="20" viewBox="0 0 16 20"><path d="M7.8 1.5 V10.5 M2.8 5.8 L7.8 10.7 L12.8 5.8" fill="none" stroke="#007acc" stroke-width="1.9"/><circle cx="7.8" cy="16.4" r="2.3" fill="#007acc"/></svg><svg class="abs" style="left:1157.50px;top:46.00px;" width="16" height="20" viewBox="0 0 16 20"><path d="M7.8 11 V2 M2.8 6.8 L7.8 1.9 L12.8 6.8" fill="none" stroke="#007acc" stroke-width="1.9"/><circle cx="7.8" cy="16.4" r="2.3" fill="#007acc"/></svg><svg class="abs" style="left:1195.00px;top:48.00px;" width="18" height="18" viewBox="0 0 18 18"><path d="M4.2 4 a6.6 6.6 0 1 1 -1.5 5" fill="none" stroke="#388a34" stroke-width="1.8"/><path d="M2.6 1.8 V6.2 H7" fill="none" stroke="#388a34" stroke-width="1.8"/></svg><svg class="abs" style="left:1234.00px;top:48.50px;" width="16" height="16" viewBox="0 0 16 16"><rect x="1.7" y="1.6" width="12.6" height="12.6" fill="none" stroke="#b5532c" stroke-width="1.9"/></svg><svg class="abs" style="left:12.00px;top:712.00px;" width="16" height="18" viewBox="0 0 16 18"><path d="M2.5 6.8 L7 11.2 L2.5 15.6 M13.5 2.5 L9 6.9 L13.5 11.3" fill="none" stroke="#fff" stroke-width="1.4"/></svg><svg class="abs" style="left:49.50px;top:712.00px;" width="17" height="18" viewBox="0 0 17 18"><g fill="none" stroke="#fff" stroke-width="1.3"><circle cx="4.3" cy="3.6" r="2.2"/><circle cx="4.3" cy="14.4" r="2.2"/><circle cx="12.6" cy="6.6" r="2.2"/><path d="M4.3 5.8 V12.2 M12.6 8.8 C12.6 11.5 9 11.2 5.6 12.6"/></g></svg><div class="t" style="left:70.60px;top:715.64px;font-size:14.60px;color:#ffffff;letter-spacing:-0.317px;-webkit-text-stroke:0.45px #fff;">master*</div><svg class="abs" style="left:137.50px;top:713.50px;" width="20" height="16" viewBox="0 0 20 16"><g fill="none" stroke="#fff" stroke-width="1.6"><path d="M3.2 7 a6.6 6.6 0 0 1 12.6 -1.5"/><path d="M16.8 9 a6.6 6.6 0 0 1 -12.6 1.5"/><path d="M16.6 1.5 V6 H12.2 M3.4 14.5 V10 H7.8"/></g></svg><svg class="abs" style="left:175.00px;top:714.20px;" width="17" height="16" viewBox="0 0 17 16"><g fill="none" stroke="#fff" stroke-width="1.3"><circle cx="8" cy="7.6" r="6.9"/><path d="M5.2 4.8 L10.8 10.4 M10.8 4.8 L5.2 10.4"/></g></svg><div class="t" style="left:195.80px;top:715.64px;font-size:14.60px;color:#ffffff;-webkit-text-stroke:0.45px #fff;transform:scaleX(0.8272);transform-origin:0 0;">0</div><svg class="abs" style="left:207.00px;top:713.80px;" width="17" height="16" viewBox="0 0 17 16"><g fill="none" stroke="#fff" stroke-width="1.3" stroke-linejoin="round"><path d="M8.2 1.2 L15.3 14.8 H1.1 Z"/><path d="M8.2 5.5 V10.5 M8.2 11.8 V13"/></g></svg><div class="t" style="left:228.00px;top:715.64px;font-size:14.60px;color:#ffffff;-webkit-text-stroke:0.45px #fff;transform:scaleX(0.8272);transform-origin:0 0;">0</div><svg class="abs" style="left:253.50px;top:712.50px;" width="19" height="18" viewBox="0 0 19 18"><g fill="none" stroke="#fff" stroke-width="1.3"><path d="M8 7.5 V1.5 L17.5 7.5 L13 10.5"/><ellipse cx="6" cy="12.5" rx="3" ry="3.6"/><path d="M3 11.5 h6 M1 9 l2 1.3 M11 9 l-2 1.3 M0.8 13 h2.2 M9 13 h2.2 M1 16.5 l2 -1.3 M11 16.5 l-2 -1.3"/></g></svg><div class="t" style="left:275.70px;top:715.64px;font-size:14.60px;color:#ffffff;letter-spacing:-0.243px;-webkit-text-stroke:0.45px #fff;">Unity Editor (Ball2020)</div><svg class="abs" style="left:437.50px;top:712.50px;" width="15" height="18" viewBox="0 0 15 18"><path d="M7.5 1.2 C8.5 4.5 12.8 6.5 12.8 11 A5.3 5.3 0 0 1 2.2 11 C2.2 8.5 3.6 7 4.6 5.8 C4.8 7.6 5.6 8.6 6.5 9 C6 6.5 6.5 3.5 7.5 1.2 Z M7.5 16 C5.8 16 5.2 14.5 5.6 13 C6.2 13.8 6.8 14 7.2 13.8 C7 12.5 7.5 11.5 8.3 10.8 C8.6 12 10 12.8 9.8 14.2 C9.6 15.3 8.6 16 7.5 16 Z" fill="none" stroke="#fff" stroke-width="1.2" stroke-linejoin="round"/></svg><svg class="abs" style="left:471.00px;top:714.00px;" width="19" height="15" viewBox="0 0 19 15"><g fill="none" stroke="#fff" stroke-width="1.3"><path d="M1.3 1.3 H7 L8.8 3.3 H16.8 V13.5 H1.3 Z M1.3 5.2 H16.8"/></g></svg><div class="t" style="left:492.90px;top:715.64px;font-size:14.60px;color:#ffffff;-webkit-text-stroke:0.45px #fff;transform:scaleX(0.9290);transform-origin:0 0;">Ball2020.sln</div><svg class="abs" style="left:657.50px;top:712.50px;" width="11" height="17" viewBox="0 0 11 17"><g fill="none" stroke="#fff" stroke-width="1.4"><circle cx="5.3" cy="8.3" r="3.1"/><path d="M5.3 0.5 V5.2 M5.3 11.4 V16.3"/></g></svg><div class="t" style="left:674.80px;top:715.64px;font-size:14.60px;color:#ffffff;-webkit-text-stroke:0.45px #fff;transform:scaleX(0.9475);transform-origin:0 0;">You, 19 days ago</div><div class="t" style="left:801.20px;top:715.64px;font-size:14.60px;color:#ffffff;-webkit-text-stroke:0.45px #fff;transform:scaleX(0.9338);transform-origin:0 0;">Ln 50, Col 10</div><div class="t" style="left:902.30px;top:715.64px;font-size:14.60px;color:#ffffff;-webkit-text-stroke:0.45px #fff;transform:scaleX(0.8853);transform-origin:0 0;">Spaces: 4</div><div class="t" style="left:979.10px;top:715.64px;font-size:14.60px;color:#ffffff;letter-spacing:-0.323px;-webkit-text-stroke:0.45px #fff;">UTF-8 with BOM</div><div class="t" style="left:1103.50px;top:715.64px;font-size:14.60px;color:#ffffff;-webkit-text-stroke:0.45px #fff;transform:scaleX(0.8204);transform-origin:0 0;">CRLF</div><div class="t" style="left:1153.80px;top:715.64px;font-size:14.60px;color:#ffffff;letter-spacing:-0.650px;-webkit-text-stroke:0.45px #fff;">C#</div><svg class="abs" style="left:1189.00px;top:712.00px;" width="20" height="19" viewBox="0 0 20 19"><g fill="none" stroke="#fff" stroke-width="1.3" stroke-linejoin="round"><path d="M6.3 5.6 V2.4 H17.8 V9.6 H14.6 L13 11.6 V9.6"/><circle cx="7.8" cy="9.6" r="3.1"/><path d="M2.4 17.6 C2.8 14.6 4.8 13 7.8 13 C10.8 13 12.8 14.6 13.2 17.6"/></g></svg><svg class="abs" style="left:1226.00px;top:712.00px;" width="22" height="19" viewBox="0 0 22 19"><g fill="none" stroke="#fff" stroke-width="1.3" stroke-linejoin="round"><path d="M3.2 14.6 C4.2 13.2 4.6 12 4.6 9.2 C4.6 6 6.6 3.8 9.4 3.8 C10.2 3.8 10.9 4 11.5 4.3 M14.2 9.6 C14.3 12 14.7 13.2 15.8 14.6 Z M3.2 14.6 H15.8 M7.6 16.4 C8 17.4 10.8 17.4 11.2 16.4"/></g><circle cx="13.4" cy="5.4" r="3.7" fill="#fff"/></svg><svg class="abs" style="left:1168.00px;top:105.00px;" width="77" height="130" viewBox="0 0 77 130"><defs><pattern id="mst" width="1" height="1.98" patternUnits="userSpaceOnUse"><rect width="0.72" height="1.98" fill="#fff"/></pattern><mask id="mmk"><rect width="77" height="130" fill="url(#mst)"/></mask></defs><g mask="url(#mmk)"><rect x="9.00" y="1.00" width="5.00" height="1.5" fill="#af00db" opacity="0.5"/><rect x="15.00" y="1.00" width="11.00" height="1.5" fill="#001080" opacity="0.5"/><rect x="26.00" y="1.00" width="1.00" height="1.5" fill="#000000" opacity="0.5"/><rect x="9.00" y="4.96" width="1.00" height="1.5" fill="#000000" opacity="0.5"/><rect x="10.00" y="4.96" width="16.00" height="1.5" fill="#795e26" opacity="0.5"/><rect x="26.00" y="4.96" width="1.00" height="1.5" fill="#000000" opacity="0.5"/><rect x="27.00" y="4.96" width="6.00" height="1.5" fill="#0000ff" opacity="0.5"/><rect x="33.00" y="4.96" width="1.00" height="1.5" fill="#000000" opacity="0.5"/><rect x="34.00" y="4.96" width="14.00" height="1.5" fill="#001080" opacity="0.5"/><rect x="48.00" y="4.96" width="3.00" height="1.5" fill="#000000" opacity="0.5"/><rect x="52.00" y="4.96" width="16.00" height="1.5" fill="#795e26" opacity="0.5"/><rect x="68.00" y="4.96" width="1.00" height="1.5" fill="#000000" opacity="0.5"/><rect x="69.00" y="4.96" width="6.00" height="1.5" fill="#0000ff" opacity="0.5"/><rect x="75.00" y="4.96" width="1.00" height="1.5" fill="#000000" opacity="0.5"/><rect x="76.00" y="4.96" width="1.00" height="1.5" fill="#001080" opacity="0.5"/><rect x="9.00" y="6.94" width="6.00" height="1.5" fill="#0000ff" opacity="0.5"/><rect x="16.00" y="6.94" width="5.00" height="1.5" fill="#0000ff" opacity="0.5"/><rect x="22.00" y="6.94" width="11.00" height="1.5" fill="#001080" opacity="0.5"/><rect x="34.00" y="6.94" width="1.00" height="1.5" fill="#000000" opacity="0.5"/><rect x="36.00" y="6.94" width="13.00" height="1.5" fill="#001080" opacity="0.5"/><rect x="9.00" y="8.92" width="1.00" height="1.5" fill="#000000" opacity="0.5"/><rect x="13.00" y="10.90" width="1.00" height="1.5" fill="#000000" opacity="0.5"/><rect x="14.00" y="10.90" width="7.00" height="1.5" fill="#795e26" opacity="0.5"/><rect x="21.00" y="10.90" width="1.00" height="1.5" fill="#000000" opacity="0.5"/><rect x="22.00" y="10.90" width="31.00" height="1.5" fill="#a31515" opacity="0.5"/><rect x="53.00" y="10.90" width="2.00" height="1.5" fill="#000000" opacity="0.5"/><rect x="13.00" y="12.88" width="6.00" height="1.5" fill="#0000ff" opacity="0.5"/><rect x="20.00" y="12.88" width="3.00" height="1.5" fill="#0000ff" opacity="0.5"/><rect x="24.00" y="12.88" width="8.00" height="1.5" fill="#001080" opacity="0.5"/><rect x="33.00" y="12.88" width="1.00" height="1.5" fill="#000000" opacity="0.5"/><rect x="35.00" y="12.88" width="1.00" height="1.5" fill="#098658" opacity="0.5"/><rect x="36.00" y="12.88" width="1.00" height="1.5" fill="#000000" opacity="0.5"/><rect x="13.00" y="16.84" width="20.00" height="1.5" fill="#008000" opacity="0.5"/><rect x="13.00" y="18.82" width="7.00" height="1.5" fill="#0000ff" opacity="0.5"/><rect x="21.00" y="18.82" width="14.00" height="1.5" fill="#001080" opacity="0.5"/><rect x="36.00" y="18.82" width="14.00" height="1.5" fill="#001080" opacity="0.5"/><rect x="50.00" y="18.82" width="1.00" height="1.5" fill="#000000" opacity="0.5"/><rect x="13.00" y="20.80" width="7.00" height="1.5" fill="#0000ff" opacity="0.5"/><rect x="21.00" y="20.80" width="8.00" height="1.5" fill="#001080" opacity="0.5"/><rect x="30.00" y="20.80" width="8.00" height="1.5" fill="#001080" opacity="0.5"/><rect x="38.00" y="20.80" width="1.00" height="1.5" fill="#000000" opacity="0.5"/><rect x="13.00" y="24.76" width="28.00" height="1.5" fill="#008000" opacity="0.5"/><rect x="13.00" y="26.74" width="7.00" height="1.5" fill="#0000ff" opacity="0.5"/><rect x="21.00" y="26.74" width="7.00" height="1.5" fill="#001080" opacity="0.5"/><rect x="29.00" y="26.74" width="4.00" height="1.5" fill="#001080" opacity="0.5"/><rect x="33.00" y="26.74" width="1.00" height="1.5" fill="#000000" opacity="0.5"/><rect x="13.00" y="30.70" width="9.00" height="1.5" fill="#008000" opacity="0.5"/><rect x="13.00" y="32.68" width="7.00" height="1.5" fill="#0000ff" opacity="0.5"/><rect x="21.00" y="32.68" width="6.00" height="1.5" fill="#0000ff" opacity="0.5"/><rect x="28.00" y="32.68" width="8.00" height="1.5" fill="#0000ff" opacity="0.5"/><rect x="37.00" y="32.68" width="3.00" height="1.5" fill="#0000ff" opacity="0.5"/><rect x="41.00" y="32.68" width="5.00" height="1.5" fill="#001080" opacity="0.5"/><rect x="47.00" y="32.68" width="1.00" height="1.5" fill="#000000" opacity="0.5"/><rect x="49.00" y="32.68" width="8.00" height="1.5" fill="#001080" opacity="0.5"/><rect x="57.00" y="32.68" width="1.00" height="1.5" fill="#000000" opacity="0.5"/><rect x="58.00" y="32.68" width="12.00" height="1.5" fill="#795e26" opacity="0.5"/><rect x="70.00" y="32.68" width="1.00" height="1.5" fill="#000000" opacity="0.5"/><rect x="71.00" y="32.68" width="6.00" height="1.5" fill="#a31515" opacity="0.5"/><rect x="13.00" y="34.66" width="7.00" height="1.5" fill="#0000ff" opacity="0.5"/><rect x="21.00" y="34.66" width="6.00" height="1.5" fill="#0000ff" opacity="0.5"/><rect x="28.00" y="34.66" width="8.00" height="1.5" fill="#0000ff" opacity="0.5"/><rect x="37.00" y="34.66" width="3.00" height="1.5" fill="#0000ff" opacity="0.5"/><rect x="41.00" y="34.66" width="4.00" height="1.5" fill="#001080" opacity="0.5"/><rect x="46.00" y="34.66" width="1.00" height="1.5" fill="#000000" opacity="0.5"/><rect x="48.00" y="34.66" width="8.00" height="1.5" fill="#001080" opacity="0.5"/><rect x="56.00" y="34.66" width="1.00" height="1.5" fill="#000000" opacity="0.5"/><rect x="57.00" y="34.66" width="12.00" height="1.5" fill="#795e26" opacity="0.5"/><rect x="69.00" y="34.66" width="1.00" height="1.5" fill="#000000" opacity="0.5"/><rect x="70.00" y="34.66" width="6.00" height="1.5" fill="#a31515" opacity="0.5"/><rect x="76.00" y="34.66" width="1.00" height="1.5" fill="#000000" opacity="0.5"/><rect x="13.00" y="36.64" width="7.00" height="1.5" fill="#0000ff" opacity="0.5"/><rect x="21.00" y="36.64" width="6.00" height="1.5" fill="#0000ff" opacity="0.5"/><rect x="28.00" y="36.64" width="8.00" height="1.5" fill="#0000ff" opacity="0.5"/><rect x="37.00" y="36.64" width="3.00" height="1.5" fill="#0000ff" opacity="0.5"/><rect x="41.00" y="36.64" width="7.00" height="1.5" fill="#001080" opacity="0.5"/><rect x="49.00" y="36.64" width="1.00" height="1.5" fill="#000000" opacity="0.5"/><rect x="51.00" y="36.64" width="8.00" height="1.5" fill="#001080" opacity="0.5"/><rect x="59.00" y="36.64" width="1.00" height="1.5" fill="#000000" opacity="0.5"/><rect x="60.00" y="36.64" width="12.00" height="1.5" fill="#795e26" opacity="0.5"/><rect x="72.00" y="36.64" width="1.00" height="1.5" fill="#000000" opacity="0.5"/><rect x="73.00" y="36.64" width="4.00" height="1.5" fill="#a31515" opacity="0.5"/><rect x="13.00" y="40.60" width="4.00" height="1.5" fill="#0000ff" opacity="0.5"/><rect x="18.00" y="40.60" width="5.00" height="1.5" fill="#795e26" opacity="0.5"/><rect x="23.00" y="40.60" width="2.00" height="1.5" fill="#000000" opacity="0.5"/><rect x="13.00" y="42.58" width="1.00" height="1.5" fill="#000000" opacity="0.5"/><rect x="17.00" y="44.56" width="14.00" height="1.5" fill="#001080" opacity="0.5"/><rect x="32.00" y="44.56" width="1.00" height="1.5" fill="#000000" opacity="0.5"/><rect x="34.00" y="44.56" width="12.00" height="1.5" fill="#001080" opacity="0.5"/><rect x="46.00" y="44.56" width="1.00" height="1.5" fill="#000000" opacity="0.5"/><rect x="47.00" y="44.56" width="14.00" height="1.5" fill="#001080" opacity="0.5"/><rect x="61.00" y="44.56" width="4.00" height="1.5" fill="#000000" opacity="0.5"/><rect x="17.00" y="46.54" width="8.00" height="1.5" fill="#001080" opacity="0.5"/><rect x="26.00" y="46.54" width="1.00" height="1.5" fill="#000000" opacity="0.5"/><rect x="28.00" y="46.54" width="12.00" height="1.5" fill="#001080" opacity="0.5"/><rect x="40.00" y="46.54" width="1.00" height="1.5" fill="#000000" opacity="0.5"/><rect x="41.00" y="46.54" width="8.00" height="1.5" fill="#001080" opacity="0.5"/><rect x="49.00" y="46.54" width="4.00" height="1.5" fill="#000000" opacity="0.5"/><rect x="13.00" y="48.52" width="1.00" height="1.5" fill="#000000" opacity="0.5"/><rect x="13.00" y="52.48" width="4.00" height="1.5" fill="#0000ff" opacity="0.5"/><rect x="18.00" y="52.48" width="6.00" height="1.5" fill="#795e26" opacity="0.5"/><rect x="24.00" y="52.48" width="2.00" height="1.5" fill="#000000" opacity="0.5"/><rect x="13.00" y="54.46" width="1.00" height="1.5" fill="#000000" opacity="0.5"/><rect x="17.00" y="56.44" width="3.00" height="1.5" fill="#0000ff" opacity="0.5"/><rect x="21.00" y="56.44" width="19.00" height="1.5" fill="#001080" opacity="0.5"/><rect x="41.00" y="56.44" width="1.00" height="1.5" fill="#000000" opacity="0.5"/><rect x="43.00" y="56.44" width="8.00" height="1.5" fill="#001080" opacity="0.5"/><rect x="52.00" y="56.44" width="1.00" height="1.5" fill="#000000" opacity="0.5"/><rect x="54.00" y="56.44" width="4.00" height="1.5" fill="#001080" opacity="0.5"/><rect x="58.00" y="56.44" width="1.00" height="1.5" fill="#000000" opacity="0.5"/><rect x="59.00" y="56.44" width="9.00" height="1.5" fill="#001080" opacity="0.5"/><rect x="68.00" y="56.44" width="1.00" height="1.5" fill="#000000" opacity="0.5"/><rect x="17.00" y="58.42" width="4.00" height="1.5" fill="#001080" opacity="0.5"/><rect x="22.00" y="58.42" width="1.00" height="1.5" fill="#000000" opacity="0.5"/><rect x="24.00" y="58.42" width="7.00" height="1.5" fill="#001080" opacity="0.5"/><rect x="31.00" y="58.42" width="1.00" height="1.5" fill="#000000" opacity="0.5"/><rect x="32.00" y="58.42" width="4.00" height="1.5" fill="#001080" opacity="0.5"/><rect x="36.00" y="58.42" width="1.00" height="1.5" fill="#000000" opacity="0.5"/><rect x="17.00" y="62.38" width="2.00" height="1.5" fill="#af00db" opacity="0.5"/><rect x="20.00" y="62.38" width="1.00" height="1.5" fill="#000000" opacity="0.5"/><rect x="21.00" y="62.38" width="5.00" height="1.5" fill="#001080" opacity="0.5"/><rect x="26.00" y="62.38" width="1.00" height="1.5" fill="#000000" opacity="0.5"/><rect x="27.00" y="62.38" width="6.00" height="1.5" fill="#795e26" opacity="0.5"/><rect x="33.00" y="62.38" width="1.00" height="1.5" fill="#000000" opacity="0.5"/><rect x="34.00" y="62.38" width="7.00" height="1.5" fill="#001080" opacity="0.5"/><rect x="41.00" y="62.38" width="1.00" height="1.5" fill="#000000" opacity="0.5"/><rect x="42.00" y="62.38" width="10.00" height="1.5" fill="#001080" opacity="0.5"/><rect x="52.00" y="62.38" width="2.00" height="1.5" fill="#000000" opacity="0.5"/><rect x="17.00" y="64.36" width="1.00" height="1.5" fill="#000000" opacity="0.5"/><rect x="21.00" y="66.34" width="4.00" height="1.5" fill="#001080" opacity="0.5"/><rect x="26.00" y="66.34" width="2.00" height="1.5" fill="#000000" opacity="0.5"/><rect x="29.00" y="66.34" width="7.00" height="1.5" fill="#001080" opacity="0.5"/><rect x="36.00" y="66.34" width="1.00" height="1.5" fill="#000000" opacity="0.5"/><rect x="37.00" y="66.34" width="5.00" height="1.5" fill="#001080" opacity="0.5"/><rect x="43.00" y="66.34" width="1.00" height="1.5" fill="#000000" opacity="0.5"/><rect x="45.00" y="66.34" width="19.00" height="1.5" fill="#001080" opacity="0.5"/><rect x="64.00" y="66.34" width="1.00" height="1.5" fill="#000000" opacity="0.5"/><rect x="21.00" y="68.32" width="14.00" height="1.5" fill="#001080" opacity="0.5"/><rect x="35.00" y="68.32" width="1.00" height="1.5" fill="#000000" opacity="0.5"/><rect x="36.00" y="68.32" width="5.00" height="1.5" fill="#001080" opacity="0.5"/><rect x="42.00" y="68.32" width="1.00" height="1.5" fill="#000000" opacity="0.5"/><rect x="44.00" y="68.32" width="5.00" height="1.5" fill="#0000ff" opacity="0.5"/><rect x="49.00" y="68.32" width="1.00" height="1.5" fill="#000000" opacity="0.5"/><rect x="17.00" y="70.30" width="1.00" height="1.5" fill="#000000" opacity="0.5"/><rect x="17.00" y="72.28" width="4.00" height="1.5" fill="#af00db" opacity="0.5"/><rect x="22.00" y="72.28" width="2.00" height="1.5" fill="#af00db" opacity="0.5"/><rect x="25.00" y="72.28" width="1.00" height="1.5" fill="#000000" opacity="0.5"/><rect x="26.00" y="72.28" width="5.00" height="1.5" fill="#001080" opacity="0.5"/><rect x="31.00" y="72.28" width="1.00" height="1.5" fill="#000000" opacity="0.5"/><rect x="32.00" y="72.28" width="6.00" height="1.5" fill="#795e26" opacity="0.5"/><rect x="38.00" y="72.28" width="1.00" height="1.5" fill="#000000" opacity="0.5"/><rect x="39.00" y="72.28" width="7.00" height="1.5" fill="#001080" opacity="0.5"/><rect x="46.00" y="72.28" width="1.00" height="1.5" fill="#000000" opacity="0.5"/><rect x="47.00" y="72.28" width="9.00" height="1.5" fill="#001080" opacity="0.5"/><rect x="56.00" y="72.28" width="2.00" height="1.5" fill="#000000" opacity="0.5"/><rect x="17.00" y="74.26" width="1.00" height="1.5" fill="#000000" opacity="0.5"/><rect x="21.00" y="76.24" width="4.00" height="1.5" fill="#001080" opacity="0.5"/><rect x="26.00" y="76.24" width="2.00" height="1.5" fill="#000000" opacity="0.5"/><rect x="29.00" y="76.24" width="7.00" height="1.5" fill="#001080" opacity="0.5"/><rect x="36.00" y="76.24" width="1.00" height="1.5" fill="#000000" opacity="0.5"/><rect x="37.00" y="76.24" width="4.00" height="1.5" fill="#001080" opacity="0.5"/><rect x="42.00" y="76.24" width="1.00" height="1.5" fill="#000000" opacity="0.5"/><rect x="44.00" y="76.24" width="19.00" height="1.5" fill="#001080" opacity="0.5"/><rect x="63.00" y="76.24" width="1.00" height="1.5" fill="#000000" opacity="0.5"/><rect x="21.00" y="78.22" width="14.00" height="1.5" fill="#001080" opacity="0.5"/><rect x="35.00" y="78.22" width="1.00" height="1.5" fill="#000000" opacity="0.5"/><rect x="36.00" y="78.22" width="5.00" height="1.5" fill="#001080" opacity="0.5"/><rect x="42.00" y="78.22" width="1.00" height="1.5" fill="#000000" opacity="0.5"/><rect x="44.00" y="78.22" width="4.00" height="1.5" fill="#0000ff" opacity="0.5"/><rect x="48.00" y="78.22" width="1.00" height="1.5" fill="#000000" opacity="0.5"/><rect x="17.00" y="80.20" width="1.00" height="1.5" fill="#000000" opacity="0.5"/><rect x="17.00" y="84.16" width="2.00" height="1.5" fill="#af00db" opacity="0.5"/><rect x="20.00" y="84.16" width="1.00" height="1.5" fill="#000000" opacity="0.5"/><rect x="21.00" y="84.16" width="5.00" height="1.5" fill="#001080" opacity="0.5"/><rect x="26.00" y="84.16" width="1.00" height="1.5" fill="#000000" opacity="0.5"/><rect x="27.00" y="84.16" width="6.00" height="1.5" fill="#795e26" opacity="0.5"/><rect x="33.00" y="84.16" width="1.00" height="1.5" fill="#000000" opacity="0.5"/><rect x="34.00" y="84.16" width="7.00" height="1.5" fill="#001080" opacity="0.5"/><rect x="41.00" y="84.16" width="1.00" height="1.5" fill="#000000" opacity="0.5"/><rect x="42.00" y="84.16" width="7.00" height="1.5" fill="#001080" opacity="0.5"/><rect x="49.00" y="84.16" width="2.00" height="1.5" fill="#000000" opacity="0.5"/><rect x="17.00" y="86.14" width="1.00" height="1.5" fill="#000000" opacity="0.5"/><rect x="21.00" y="88.12" width="4.00" height="1.5" fill="#001080" opacity="0.5"/><rect x="26.00" y="88.12" width="2.00" height="1.5" fill="#000000" opacity="0.5"/><rect x="29.00" y="88.12" width="7.00" height="1.5" fill="#001080" opacity="0.5"/><rect x="36.00" y="88.12" width="1.00" height="1.5" fill="#000000" opacity="0.5"/><rect x="37.00" y="88.12" width="2.00" height="1.5" fill="#001080" opacity="0.5"/><rect x="40.00" y="88.12" width="1.00" height="1.5" fill="#000000" opacity="0.5"/><rect x="42.00" y="88.12" width="19.00" height="1.5" fill="#001080" opacity="0.5"/><rect x="61.00" y="88.12" width="1.00" height="1.5" fill="#000000" opacity="0.5"/><rect x="17.00" y="90.10" width="1.00" height="1.5" fill="#000000" opacity="0.5"/><rect x="17.00" y="92.08" width="4.00" height="1.5" fill="#af00db" opacity="0.5"/><rect x="22.00" y="92.08" width="2.00" height="1.5" fill="#af00db" opacity="0.5"/><rect x="25.00" y="92.08" width="1.00" height="1.5" fill="#000000" opacity="0.5"/><rect x="26.00" y="92.08" width="5.00" height="1.5" fill="#001080" opacity="0.5"/><rect x="31.00" y="92.08" width="1.00" height="1.5" fill="#000000" opacity="0.5"/><rect x="32.00" y="92.08" width="6.00" height="1.5" fill="#795e26" opacity="0.5"/><rect x="38.00" y="92.08" width="1.00" height="1.5" fill="#000000" opacity="0.5"/><rect x="39.00" y="92.08" width="7.00" height="1.5" fill="#001080" opacity="0.5"/><rect x="46.00" y="92.08" width="1.00" height="1.5" fill="#000000" opacity="0.5"/><rect x="47.00" y="92.08" width="9.00" height="1.5" fill="#001080" opacity="0.5"/><rect x="56.00" y="92.08" width="2.00" height="1.5" fill="#000000" opacity="0.5"/><rect x="17.00" y="94.06" width="1.00" height="1.5" fill="#000000" opacity="0.5"/><rect x="21.00" y="96.04" width="4.00" height="1.5" fill="#001080" opacity="0.5"/><rect x="26.00" y="96.04" width="2.00" height="1.5" fill="#000000" opacity="0.5"/><rect x="29.00" y="96.04" width="7.00" height="1.5" fill="#001080" opacity="0.5"/><rect x="36.00" y="96.04" width="1.00" height="1.5" fill="#000000" opacity="0.5"/><rect x="37.00" y="96.04" width="4.00" height="1.5" fill="#001080" opacity="0.5"/><rect x="42.00" y="96.04" width="1.00" height="1.5" fill="#000000" opacity="0.5"/><rect x="44.00" y="96.04" width="19.00" height="1.5" fill="#001080" opacity="0.5"/><rect x="63.00" y="96.04" width="1.00" height="1.5" fill="#000000" opacity="0.5"/><rect x="17.00" y="98.02" width="1.00" height="1.5" fill="#000000" opacity="0.5"/><rect x="17.00" y="101.98" width="2.00" height="1.5" fill="#af00db" opacity="0.5"/><rect x="20.00" y="101.98" width="1.00" height="1.5" fill="#000000" opacity="0.5"/><rect x="21.00" y="101.98" width="5.00" height="1.5" fill="#001080" opacity="0.5"/><rect x="26.00" y="101.98" width="1.00" height="1.5" fill="#000000" opacity="0.5"/><rect x="27.00" y="101.98" width="6.00" height="1.5" fill="#795e26" opacity="0.5"/><rect x="33.00" y="101.98" width="1.00" height="1.5" fill="#000000" opacity="0.5"/><rect x="34.00" y="101.98" width="7.00" height="1.5" fill="#001080" opacity="0.5"/><rect x="41.00" y="101.98" width="1.00" height="1.5" fill="#000000" opacity="0.5"/><rect x="42.00" y="101.98" width="5.00" height="1.5" fill="#001080" opacity="0.5"/><rect x="47.00" y="101.98" width="2.00" height="1.5" fill="#000000" opacity="0.5"/><rect x="17.00" y="103.96" width="1.00" height="1.5" fill="#000000" opacity="0.5"/><rect x="21.00" y="105.94" width="8.00" height="1.5" fill="#001080" opacity="0.5"/><rect x="29.00" y="105.94" width="1.00" height="1.5" fill="#000000" opacity="0.5"/><rect x="30.00" y="105.94" width="10.00" height="1.5" fill="#795e26" opacity="0.5"/><rect x="40.00" y="105.94" width="1.00" height="1.5" fill="#000000" opacity="0.5"/><rect x="41.00" y="105.94" width="4.00" height="1.5" fill="#001080" opacity="0.5"/><rect x="45.00" y="105.94" width="2.00" height="1.5" fill="#000000" opacity="0.5"/><rect x="17.00" y="107.92" width="1.00" height="1.5" fill="#000000" opacity="0.5"/><rect x="17.00" y="111.88" width="8.00" height="1.5" fill="#001080" opacity="0.5"/><rect x="25.00" y="111.88" width="1.00" height="1.5" fill="#000000" opacity="0.5"/><rect x="26.00" y="111.88" width="7.00" height="1.5" fill="#795e26" opacity="0.5"/><rect x="33.00" y="111.88" width="1.00" height="1.5" fill="#000000" opacity="0.5"/><rect x="34.00" y="111.88" width="7.00" height="1.5" fill="#001080" opacity="0.5"/><rect x="41.00" y="111.88" width="1.00" height="1.5" fill="#000000" opacity="0.5"/><rect x="43.00" y="111.88" width="5.00" height="1.5" fill="#001080" opacity="0.5"/><rect x="48.00" y="111.88" width="1.00" height="1.5" fill="#000000" opacity="0.5"/><rect x="49.00" y="111.88" width="6.00" height="1.5" fill="#795e26" opacity="0.5"/><rect x="55.00" y="111.88" width="1.00" height="1.5" fill="#000000" opacity="0.5"/><rect x="56.00" y="111.88" width="7.00" height="1.5" fill="#001080" opacity="0.5"/><rect x="63.00" y="111.88" width="1.00" height="1.5" fill="#000000" opacity="0.5"/><rect x="64.00" y="111.88" width="7.00" height="1.5" fill="#001080" opacity="0.5"/><rect x="71.00" y="111.88" width="3.00" height="1.5" fill="#000000" opacity="0.5"/><rect x="17.00" y="115.84" width="8.00" height="1.5" fill="#001080" opacity="0.5"/><rect x="25.00" y="115.84" width="1.00" height="1.5" fill="#000000" opacity="0.5"/><rect x="26.00" y="115.84" width="8.00" height="1.5" fill="#795e26" opacity="0.5"/><rect x="34.00" y="115.84" width="1.00" height="1.5" fill="#000000" opacity="0.5"/><rect x="35.00" y="115.84" width="5.00" height="1.5" fill="#001080" opacity="0.5"/><rect x="40.00" y="115.84" width="1.00" height="1.5" fill="#000000" opacity="0.5"/><rect x="42.00" y="115.84" width="4.00" height="1.5" fill="#001080" opacity="0.5"/><rect x="46.00" y="115.84" width="1.00" height="1.5" fill="#000000" opacity="0.5"/><rect x="47.00" y="115.84" width="9.00" height="1.5" fill="#001080" opacity="0.5"/><rect x="57.00" y="115.84" width="1.00" height="1.5" fill="#000000" opacity="0.5"/><rect x="59.00" y="115.84" width="3.00" height="1.5" fill="#098658" opacity="0.5"/><rect x="62.00" y="115.84" width="2.00" height="1.5" fill="#000000" opacity="0.5"/><rect x="17.00" y="117.82" width="4.00" height="1.5" fill="#0000ff" opacity="0.5"/><rect x="21.00" y="117.82" width="1.00" height="1.5" fill="#000000" opacity="0.5"/><rect x="22.00" y="117.82" width="9.00" height="1.5" fill="#001080" opacity="0.5"/><rect x="31.00" y="117.82" width="1.00" height="1.5" fill="#000000" opacity="0.5"/><rect x="32.00" y="117.82" width="8.00" height="1.5" fill="#001080" opacity="0.5"/><rect x="41.00" y="117.82" width="1.00" height="1.5" fill="#000000" opacity="0.5"/><rect x="43.00" y="117.82" width="4.00" height="1.5" fill="#0000ff" opacity="0.5"/><rect x="47.00" y="117.82" width="1.00" height="1.5" fill="#000000" opacity="0.5"/><rect x="48.00" y="117.82" width="9.00" height="1.5" fill="#001080" opacity="0.5"/><rect x="57.00" y="117.82" width="1.00" height="1.5" fill="#000000" opacity="0.5"/><rect x="58.00" y="117.82" width="8.00" height="1.5" fill="#001080" opacity="0.5"/><rect x="67.00" y="117.82" width="1.00" height="1.5" fill="#000000" opacity="0.5"/><rect x="69.00" y="117.82" width="4.00" height="1.5" fill="#001080" opacity="0.5"/><rect x="73.00" y="117.82" width="1.00" height="1.5" fill="#000000" opacity="0.5"/><rect x="13.00" y="119.80" width="1.00" height="1.5" fill="#000000" opacity="0.5"/><rect x="9.00" y="121.78" width="1.00" height="1.5" fill="#000000" opacity="0.5"/></g><rect x="6" y="98.62" width="71" height="1" fill="#a8d8f0"/></svg><div class="abs" style="left:1171.00px;top:161.44px;width:2.00px;height:1.98px;background:#66afe0;"></div><div class="abs" style="left:1171.00px;top:171.34px;width:2.00px;height:1.98px;background:#66afe0;"></div><div class="abs" style="left:1171.00px;top:181.24px;width:2.00px;height:1.98px;background:#66afe0;"></div><div class="abs" style="left:1171.00px;top:193.12px;width:2.00px;height:1.98px;background:#66afe0;"></div><div class="abs" style="left:1171.00px;top:201.04px;width:2.00px;height:11.88px;background:#66afe0;"></div><div class="abs" style="left:1171.00px;top:214.90px;width:2.00px;height:1.98px;background:#66afe0;"></div><div class="abs" style="left:1171.00px;top:216.88px;width:2.00px;height:3.96px;background:#81b88b;"></div><div class="abs" style="left:1171.00px;top:139.66px;width:2.00px;height:3.96px;background:#81b88b;"></div></body></html>
